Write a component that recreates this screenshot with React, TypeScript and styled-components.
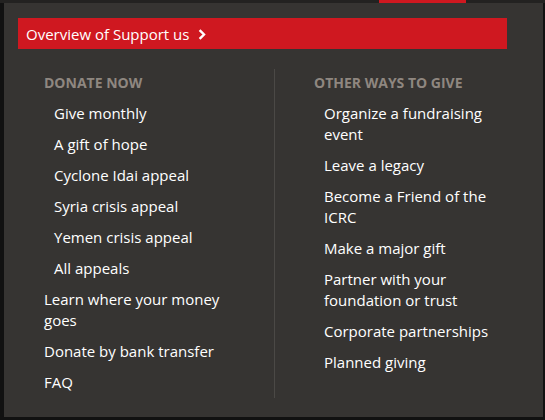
import styled, { createGlobalStyle } from 'styled-components';

const GlobalStyle = createGlobalStyle`
	html, body {
		margin: 0;
		padding: 0;
		background: #111;
		font-family: 'Open Sans', 'Liberation Sans', sans-serif;
	}
`;

const donateLinks = [
	{ label: 'Give monthly', sub: true },
	{ label: 'A gift of hope', sub: true },
	{ label: 'Cyclone Idai appeal', sub: true },
	{ label: 'Syria crisis appeal', sub: true },
	{ label: 'Yemen crisis appeal', sub: true },
	{ label: 'All appeals', sub: true },
	{ label: 'Learn where your money goes', sub: false },
	{ label: 'Donate by bank transfer', sub: false },
	{ label: 'FAQ', sub: false },
];

const otherLinks = [
	'Organize a fundraising event',
	'Leave a legacy',
	'Become a Friend of the ICRC',
	'Make a major gift',
	'Partner with your foundation or trust',
	'Corporate partnerships',
	'Planned giving',
];

const App = () => {
	return (
		<Page>
			<GlobalStyle />
			<NavStrip>
				<ActiveTab />
			</NavStrip>
			<Body>
				<Panel>
					<OverviewLink href="#">
						Overview of Support us
						<svg width="8" height="11" viewBox="0 0 8 11">
							<path d="M1.6 1.2 L6 5.5 L1.6 9.8" fill="none" stroke="#fff" strokeWidth="2.4" />
						</svg>
					</OverviewLink>
					<Columns>
						<Column $divider>
							<Heading>Donate now</Heading>
							{donateLinks.map((l) => (
								<Item key={l.label} href="#" $sub={l.sub}>
									{l.label}
								</Item>
							))}
						</Column>
						<Column>
							<Heading>Other ways to give</Heading>
							{otherLinks.map((l) => (
								<Item key={l} href="#" $sub>
									{l}
								</Item>
							))}
						</Column>
					</Columns>
				</Panel>
			</Body>
		</Page>
	);
};

const Page = styled.div`
	width: 545px;
	height: 420px;
	overflow: hidden;
	background: #111;
`;

const NavStrip = styled.div`
	height: 3px;
	background: #232221;
	position: relative;
`;

const ActiveTab = styled.div`
	position: absolute;
	left: 379px;
	top: 0;
	width: 87px;
	height: 3px;
	background: #cf1820;
`;

const Body = styled.div`
	padding-left: 4px;
	padding-right: 2px;
`;

const Panel = styled.div`
	background: #363432;
	height: 414px;
	padding: 15px 0 0 14px;
	box-sizing: border-box;
`;

const OverviewLink = styled.a`
	display: flex;
	align-items: center;
	gap: 9px;
	width: 489px;
	height: 31px;
	box-sizing: border-box;
	padding: 0 8px;
	background: #cf1820;
	color: #fff;
	font-size: 15px;
	text-decoration: none;
	svg {
		margin-top: 1px;
	}
`;

const Columns = styled.div`
	display: flex;
	margin: 20px 0 0 26px;
`;

const Column = styled.div<{ $divider?: boolean }>`
	display: flex;
	flex-direction: column;
	gap: 10px;
	box-sizing: border-box;
	width: ${(p) => (p.$divider ? '231px' : '229px')};
	padding: ${(p) => (p.$divider ? '4px 40px 5px 0' : '4px 0 5px 39px')};
	border-right: ${(p) => (p.$divider ? '1px solid #4b4946' : 'none')};
`;

const Heading = styled.div`
	font-size: 14px;
	line-height: 20px;
	font-weight: 700;
	text-transform: uppercase;
	color: #8f8780;
`;

const Item = styled.a<{ $sub?: boolean }>`
	display: block;
	padding-left: ${(p) => (p.$sub ? '10px' : '0')};
	max-width: ${(p) => (p.$sub ? '180px' : '190px')};
	font-size: 15px;
	line-height: 21px;
	color: #fff;
	text-decoration: none;
`;

export default App;
